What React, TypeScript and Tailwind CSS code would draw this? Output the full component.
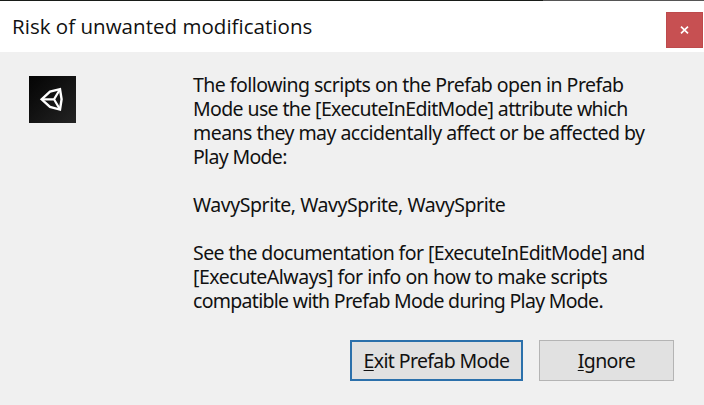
import React from "react";

type Line = { text: string; tracking: string };

const paragraphs: Line[][] = [
  [
    { text: "The following scripts on the Prefab open in Prefab", tracking: "tracking-[-0.53px]" },
    { text: "Mode use the [ExecuteInEditMode] attribute which", tracking: "tracking-[-0.62px]" },
    { text: "means they may accidentally affect or be affected by", tracking: "tracking-[-0.54px]" },
    { text: "Play Mode:", tracking: "tracking-[-0.68px]" },
  ],
  [{ text: "WavySprite, WavySprite, WavySprite", tracking: "tracking-[-0.45px]" }],
  [
    { text: "See the documentation for [ExecuteInEditMode] and", tracking: "tracking-[-0.58px]" },
    { text: "[ExecuteAlways] for info on how to make scripts", tracking: "tracking-[-0.48px]" },
    { text: "compatible with Prefab Mode during Play Mode.", tracking: "tracking-[-0.7px]" },
  ],
];

function UnityIcon() {
  return (
    <div className="flex h-[47px] w-[47px] items-center justify-center bg-linear-to-br from-[#050505] to-[#242424]">
      <svg width="47" height="47" viewBox="0 0 47 47" fill="none" stroke="#fff" strokeWidth="2.4">
        <path d="M12.6 23.3 L21 15.6 L31 13.2 L32.6 23.3 L31 33.6 L21 31 Z" />
        <path d="M13 23.3 H25 L30.6 14 M25 23.3 L30.6 32.8" strokeWidth="2.2" />
      </svg>
    </div>
  );
}

export default function App() {
  return (
    <div className="flex h-[405px] w-[704px] flex-col overflow-hidden bg-[#f0f0f0] font-['Noto_Sans',sans-serif] text-[#111]">
      <div className="flex h-px shrink-0">
        <div className="w-[543px] bg-[#181c18]" />
        <div className="flex-1 bg-[#555]" />
      </div>
      <header className="flex h-[51px] shrink-0 justify-between bg-white pl-3 pr-px">
        <h1 className="pt-[10px] font-['Open_Sans',sans-serif] text-[20.5px] leading-[30px] tracking-[0.03px]">
          Risk of unwanted modifications
        </h1>
        <button className="mt-[11px] flex h-[36px] w-[37px] items-center justify-center border border-[#bd4a4c] bg-[#c75052]" aria-label="Close">
          <svg width="9" height="8" viewBox="0 0 9 8" stroke="#fff" strokeWidth="1.7">
            <path d="M1 0.7 L8 7.3 M8 0.7 L1 7.3" />
          </svg>
        </button>
      </header>
      <main className="flex h-[288px] shrink-0 pl-[29px] pt-[21px]">
        <div className="mr-[117px] pt-[3px]">
          <UnityIcon />
        </div>
        <div className="flex flex-col gap-6 text-[19.5px] leading-6">
          {paragraphs.map((lines, i) => (
            <div key={i}>
              {lines.map(({ text, tracking }) => (
                <p key={text} className={`w-max whitespace-nowrap ${tracking}`}>
                  {text}
                </p>
              ))}
            </div>
          ))}
        </div>
      </main>
      <footer className="flex shrink-0 justify-end gap-[16px] pr-[30px] text-[19.5px]">
        <button className="h-[41px] w-[173px] whitespace-nowrap border-2 border-[#2b70ab] bg-[#e1e1e1] tracking-[-0.63px]">
          <span className="underline decoration-1 underline-offset-2">E</span>xit Prefab Mode
        </button>
        <button className="h-[41px] w-[135px] border border-[#b4b4b4] bg-[#e1e1e1] tracking-[-0.6px]">
          <span className="underline decoration-1 underline-offset-2">I</span>gnore
        </button>
      </footer>
    </div>
  );
}
